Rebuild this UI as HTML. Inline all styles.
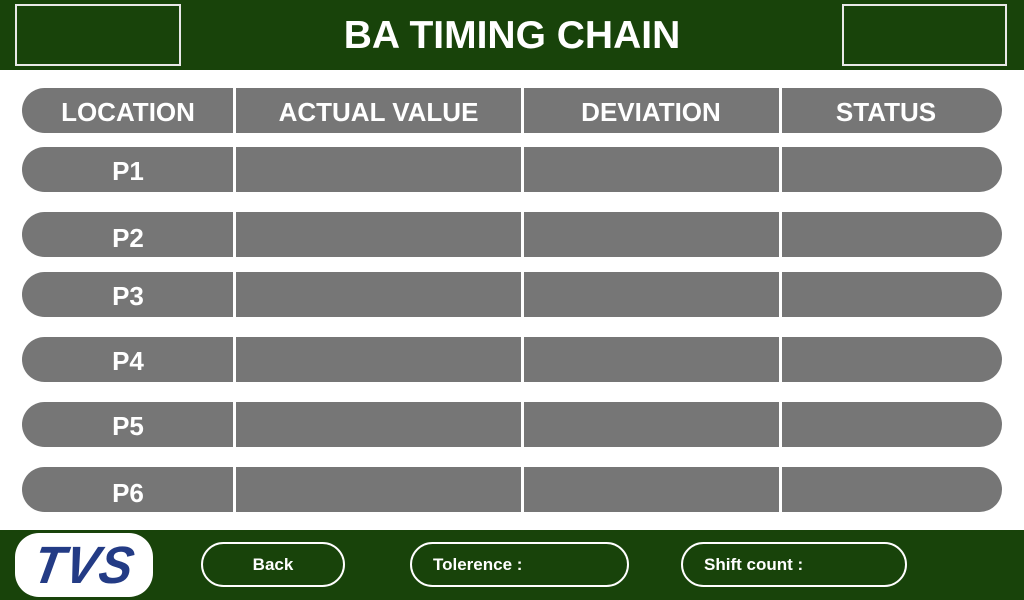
<!DOCTYPE html>
<html><head><style>
*{margin:0;padding:0;box-sizing:border-box}
body{width:1024px;height:600px;position:relative;background:#fff;font-family:"Liberation Sans",sans-serif;overflow:hidden}
.hdr{position:absolute;left:0;top:0;width:1024px;height:70px;background:#18430a}
.box{position:absolute;top:4px;height:62px;border:2px solid #e8e8e8}
.title{position:absolute;left:0;width:1024px;top:14px;text-align:center;color:#fff;font-weight:bold;font-size:39px}
.row{position:absolute;left:22px;width:980px;height:45px;background:#767676;border-radius:23px;color:#fff;font-weight:bold}
.sep{position:absolute;top:0;width:3px;height:100%;background:#fff}
.c{position:absolute;top:0;height:100%;display:flex;align-items:center;justify-content:center;font-size:26px;padding-top:3px}
.ftr{position:absolute;left:0;top:530px;width:1024px;height:70px;background:#18430a}
.btn{position:absolute;top:12px;height:45px;border:2px solid #fff;border-radius:23px;color:#fff;font-weight:bold;font-size:17px;display:flex;align-items:center}
</style></head><body>
<div class="hdr">
<div class="box" style="left:15px;width:166px"></div>
<div class="box" style="left:842px;width:165px"></div>
<div class="title">BA TIMING CHAIN</div>
</div>
<div class="row" style="top:88px"><div class="c" style="left:0;width:212px">LOCATION</div><div class="sep" style="left:211px"></div><div class="c" style="left:213px;width:287px">ACTUAL VALUE</div><div class="sep" style="left:499px"></div><div class="c" style="left:501px;width:256px">DEVIATION</div><div class="sep" style="left:757px"></div><div class="c" style="left:759px;width:210px">STATUS</div></div>
<div class="row" style="top:147px"><div class="c" style="left:0;width:212px">P1</div><div class="sep" style="left:211px"></div><div class="sep" style="left:499px"></div><div class="sep" style="left:757px"></div></div>
<div class="row" style="top:212px"><div class="c" style="left:0;width:212px;top:2px">P2</div><div class="sep" style="left:211px"></div><div class="sep" style="left:499px"></div><div class="sep" style="left:757px"></div></div>
<div class="row" style="top:272px"><div class="c" style="left:0;width:212px">P3</div><div class="sep" style="left:211px"></div><div class="sep" style="left:499px"></div><div class="sep" style="left:757px"></div></div>
<div class="row" style="top:337px"><div class="c" style="left:0;width:212px">P4</div><div class="sep" style="left:211px"></div><div class="sep" style="left:499px"></div><div class="sep" style="left:757px"></div></div>
<div class="row" style="top:402px"><div class="c" style="left:0;width:212px">P5</div><div class="sep" style="left:211px"></div><div class="sep" style="left:499px"></div><div class="sep" style="left:757px"></div></div>
<div class="row" style="top:467px"><div class="c" style="left:0;width:212px;top:2px">P6</div><div class="sep" style="left:211px"></div><div class="sep" style="left:499px"></div><div class="sep" style="left:757px"></div></div>
<div class="ftr">
<div style="position:absolute;left:15px;top:3px;width:138px;height:64px;background:#fff;border-radius:24px;display:flex;align-items:center;justify-content:center"><span style="font-family:'Liberation Sans',sans-serif;font-weight:bold;font-style:italic;font-size:50px;color:#233b85;letter-spacing:1px;transform:skewX(-10deg) scaleY(1.05)">TVS</span></div>
<div class="btn" style="left:201px;width:144px;justify-content:center">Back</div>
<div class="btn" style="left:410px;width:219px;padding-left:21px">Tolerence :</div>
<div class="btn" style="left:681px;width:226px;padding-left:21px">Shift count :</div>
</div>
</body></html>
